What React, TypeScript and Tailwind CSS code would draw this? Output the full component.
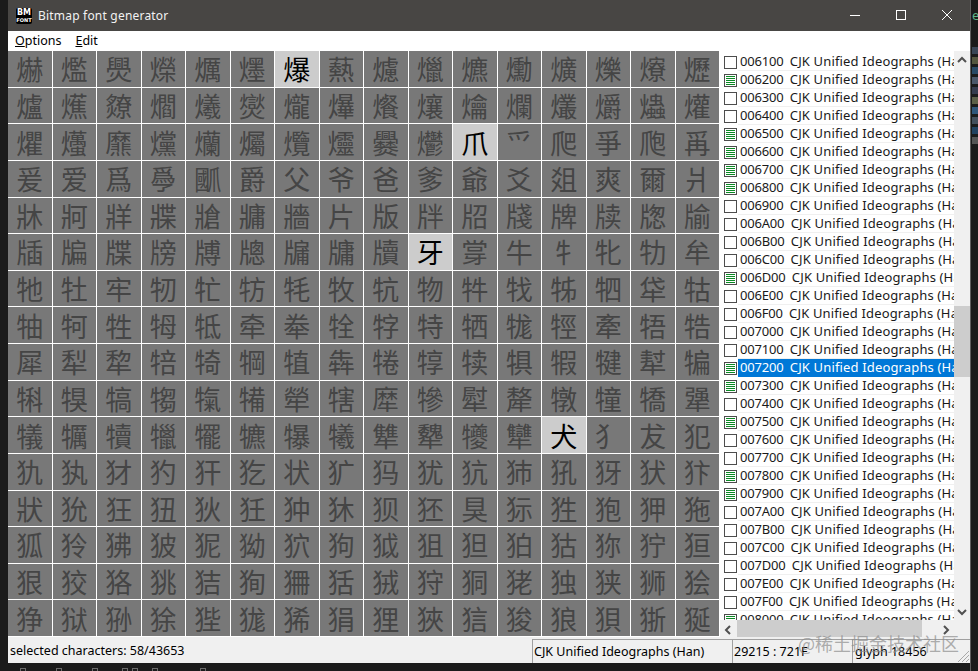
import { ReactNode } from "react";

const UI_FONT = "font-['Noto_Sans',sans-serif]";

// the page shows block U+7200..U+72FF, 16 cells per row
const GLYPHS = Array.from({ length: 256 }, (_, i) => String.fromCodePoint(0x7200 + i));
const SELECTED = new Set([0x06, 0x2a, 0x59, 0xac]);

const BLOCKS: [string, boolean][] = [
  ["006100", false],
  ["006200", true],
  ["006300", false],
  ["006400", false],
  ["006500", true],
  ["006600", true],
  ["006700", true],
  ["006800", true],
  ["006900", false],
  ["006A00", false],
  ["006B00", false],
  ["006C00", false],
  ["006D00", true],
  ["006E00", false],
  ["006F00", false],
  ["007000", false],
  ["007100", false],
  ["007200", true],
  ["007300", true],
  ["007400", false],
  ["007500", true],
  ["007600", false],
  ["007700", false],
  ["007800", true],
  ["007900", true],
  ["007A00", false],
  ["007B00", false],
  ["007C00", false],
  ["007D00", false],
  ["007E00", false],
  ["007F00", false],
  ["008000", true],
];

// bits of the window behind, showing past the right edge and below the window
const BEHIND = ["#3a4656", "#55573f", "#2a4a66", "#4c586a", "#363c4e", "#5c6048", "#30567a", "#444f5c", "#234260", "#555555"];
const BEHIND_BOTTOM = [20, 56, 92, 122, 132, 152, 200];

function BlockCheck({ filled }: { filled: boolean }) {
  return (
    <svg width="13" height="13" viewBox="0 0 13 13" className="shrink-0">
      <rect x="0.5" y="0.5" width="12" height="12" fill="#fff" stroke="#4d4d4d" />
      {filled && <path d="M2 2.5h9M2 4.5h9M2 6.5h9M2 8.5h9M2 10.5h9" stroke="#0b8a24" />}
    </svg>
  );
}

function Chevron({ dir }: { dir: "up" | "down" | "left" | "right" }) {
  const points = {
    up: "1,6 5,2 9,6",
    down: "1,2 5,6 9,2",
    left: "6,1 2,5 6,9",
    right: "3,1 7,5 3,9",
  }[dir];
  return (
    <svg width="10" height="10" viewBox="0 0 10 8" className="overflow-visible">
      <polyline points={points} fill="none" stroke="#505050" strokeWidth="2" />
    </svg>
  );
}

function StatusPanel({ className, children }: { className: string; children: ReactNode }) {
  return (
    <div className={`${className} mt-[2px] flex h-[24px] items-center border-t border-l border-[#a0a0a0] pt-[2px] pl-[1px] whitespace-pre`}>
      {children}
    </div>
  );
}

export default function App() {
  return (
    <div className={`${UI_FONT} relative flex h-[671px] w-[978px] overflow-hidden bg-[#1b1b1b] text-[13px] text-black`}>
      <div className="w-[8px] shrink-0" />

      <div className="flex h-[663px] w-[962px] shrink-0 flex-col bg-[#f0f0f0]">
        {/* title bar */}
        <div className="flex h-[31px] shrink-0 items-center bg-[#484644] text-white">
          <div className="ml-[8px] flex h-[16px] w-[16px] flex-col items-center justify-center rounded-[2px] bg-black font-['DejaVu_Sans',sans-serif] font-bold leading-none">
            <span className="text-[8px] leading-[8px]">BM</span>
            <span className="text-[5px] leading-[6px]">FONT</span>
          </div>
          <span className="ml-[6px] text-[12px] tracking-[0.2px] text-[#f2f2f2]">Bitmap font generator</span>
          <div className="ml-auto flex items-center">
            <svg width="46" height="31" viewBox="0 0 46 31">
              <path d="M18 15.5h10" stroke="#fff" />
            </svg>
            <svg width="46" height="31" viewBox="0 0 46 31">
              <rect x="18.5" y="10.5" width="9" height="9" fill="none" stroke="#fff" />
            </svg>
            <svg width="46" height="31" viewBox="0 0 46 31">
              <path d="M18 10l10 10M28 10l-10 10" stroke="#fff" />
            </svg>
          </div>
        </div>

        {/* menu */}
        <div className="flex h-[20px] shrink-0 items-center gap-[14px] bg-white pl-[7px] text-[12.5px]">
          <span>
            <span className="underline">O</span>ptions
          </span>
          <span>
            <span className="underline">E</span>dit
          </span>
        </div>

        <div className="flex h-[586px] shrink-0">
          {/* glyph grid */}
          <div className="grid h-[586px] w-[712px] shrink-0 grid-cols-[repeat(16,1fr)] grid-rows-[repeat(16,1fr)] font-['Noto_Sans_CJK_SC',sans-serif]">
            {GLYPHS.map((ch, i) => (
              <div
                key={i}
                className={`flex min-h-0 min-w-0 items-center justify-center border-r border-b border-white text-[27px] leading-[35px] ${
                  SELECTED.has(i) ? "bg-[#cccccc] text-black" : "bg-[#787878] text-[#454545]"
                }`}
              >
                {ch}
              </div>
            ))}
          </div>

          <div className="flex w-[250px] shrink-0 flex-col">
            <div className="flex h-[569px] shrink-0">
              {/* unicode block list */}
              <div className="w-[234px] shrink-0 overflow-hidden bg-white pt-[2px]">
                {BLOCKS.map(([code, filled]) => {
                  const active = code === "007200";
                  return (
                    <div key={code} className="flex h-[18px] items-center pl-[4px]">
                      <BlockCheck filled={filled} />
                      <div
                        className={`ml-[1px] flex h-[18px] min-w-0 flex-1 items-center overflow-hidden border-b pl-[2px] whitespace-pre ${
                          active ? "border-[#0078d7] bg-[#0078d7] text-white" : "border-[#f0f0f0] text-[#1a1a1a]"
                        }`}
                      >
                        <span className="tracking-[-0.2px]">{code}  </span>
                        <span className="tracking-[0.15px]">CJK Unified Ideographs (Han)</span>
                      </div>
                    </div>
                  );
                })}
              </div>

              {/* vertical scrollbar */}
              <div className="flex w-[16px] shrink-0 flex-col bg-[#f0f0f0]">
                <div className="flex h-[17px] shrink-0 items-center justify-center">
                  <Chevron dir="up" />
                </div>
                <div className="min-h-0 flex-1">
                  <div className="mt-[238px] h-[71px] bg-[#cdcdcd]" />
                </div>
                <div className="flex h-[17px] shrink-0 items-center justify-center">
                  <Chevron dir="down" />
                </div>
              </div>
            </div>

            {/* horizontal scrollbar */}
            <div className="flex h-[17px] shrink-0 bg-[#f0f0f0]">
              <div className="flex w-[17px] shrink-0 items-center justify-center">
                <Chevron dir="left" />
              </div>
              <div className="w-[200px] shrink-0">
                <div className="h-full w-[185px] bg-[#cdcdcd]" />
              </div>
              <div className="flex w-[17px] shrink-0 items-center justify-center">
                <Chevron dir="right" />
              </div>
            </div>
          </div>
        </div>

        {/* status bar */}
        <div className="flex h-[26px] shrink-0 bg-[#f0f0f0] text-[12.5px]">
          <div className="flex h-[26px] w-[524px] shrink-0 items-center pt-[3px] pl-[2px]">selected characters: 58/43653</div>
          <StatusPanel className="w-[200px] shrink-0">CJK Unified Ideographs (Han)</StatusPanel>
          <StatusPanel className="w-[120px] shrink-0">29215 : 721F</StatusPanel>
          <StatusPanel className="min-w-0 flex-1 pl-[2px]">glyph 18456</StatusPanel>
        </div>
      </div>

      {/* sliver of the window behind */}
      <div className="flex w-[8px] shrink-0 flex-col border-l border-[#5e5e5e]">
        <div className="h-[31px] overflow-hidden pt-[5px] pl-px text-[13px] leading-[20px] text-[#5fb58a]">e</div>
        <div className="mt-[16px] flex flex-col gap-[3px] pl-px">
          {BEHIND.map((c, i) => (
            <div key={i} className="h-[7px] w-[6px]" style={{ backgroundColor: c }} />
          ))}
        </div>
      </div>
      {BEHIND_BOTTOM.map((x) => (
        <div key={x} className="absolute top-[668px] h-[3px] w-[6px] border-t border-r border-l border-[#6a6a6a]" style={{ left: x }} />
      ))}

      {/* size grip */}
      <svg width="14" height="14" viewBox="0 0 14 14" className="absolute top-[649px] left-[956px]">
        <path d="M13 2L2 13M13 6L6 13M13 10L10 13" stroke="#a8a8a8" />
      </svg>

      {/* site watermark */}
      <div className="absolute top-[630px] left-[798px] font-['Noto_Sans_CJK_SC',sans-serif] text-[18px] leading-[26px] whitespace-pre text-[#8c8c8c]/70">
        @稀土掘金技术社区
      </div>
    </div>
  );
}
